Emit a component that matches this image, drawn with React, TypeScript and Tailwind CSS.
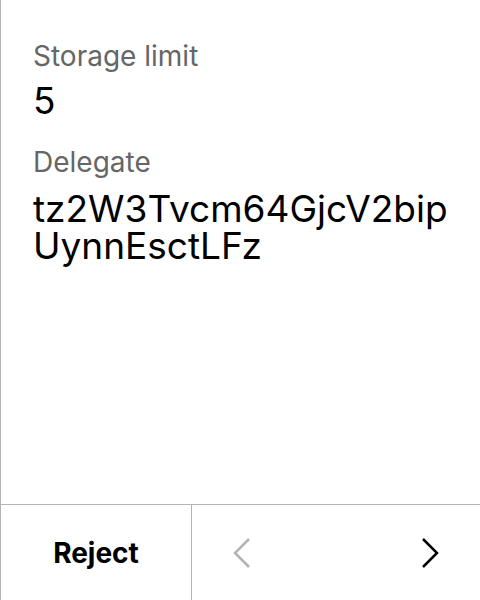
import React from "react";

export default function App() {
  return (
    <div
      className="w-[480px] h-[600px] bg-white flex flex-col border-l border-[#b3b3b3] text-black"
      style={{ fontFamily: "Inter, 'Liberation Sans', sans-serif" }}
    >
      <div className="flex-1 pl-8 pr-8 pt-[39px] flex flex-col">
        <div className="text-[28px] leading-[34px] text-[#666666]">Storage limit</div>
        <div className="text-[37px] leading-[40px] mt-[8px]">5</div>
        <div className="text-[28px] leading-[34px] text-[#666666] mt-[24px]">Delegate</div>
        <div className="text-[37px] leading-[37px] break-all mt-[11px]">tz2W3Tvcm64GjcV2bipUynnEsctLFz</div>
      </div>
      <div className="h-[96px] border-t border-[#b3b3b3] flex">
        <div className="w-[191px] border-r border-[#b3b3b3] flex items-center justify-center text-[28px] font-bold">
          Reject
        </div>
        <div className="flex-1 flex items-center justify-between pl-[40px] pr-[40px]">
          <svg width="20" height="32" viewBox="0 0 20 32" fill="none">
            <path d="M17 2 L3 16 L17 30" stroke="#b3b3b3" strokeWidth="2.5" />
          </svg>
          <svg width="20" height="32" viewBox="0 0 20 32" fill="none">
            <path d="M3 2 L17 16 L3 30" stroke="#000" strokeWidth="2.5" />
          </svg>
        </div>
      </div>
    </div>
  );
}
